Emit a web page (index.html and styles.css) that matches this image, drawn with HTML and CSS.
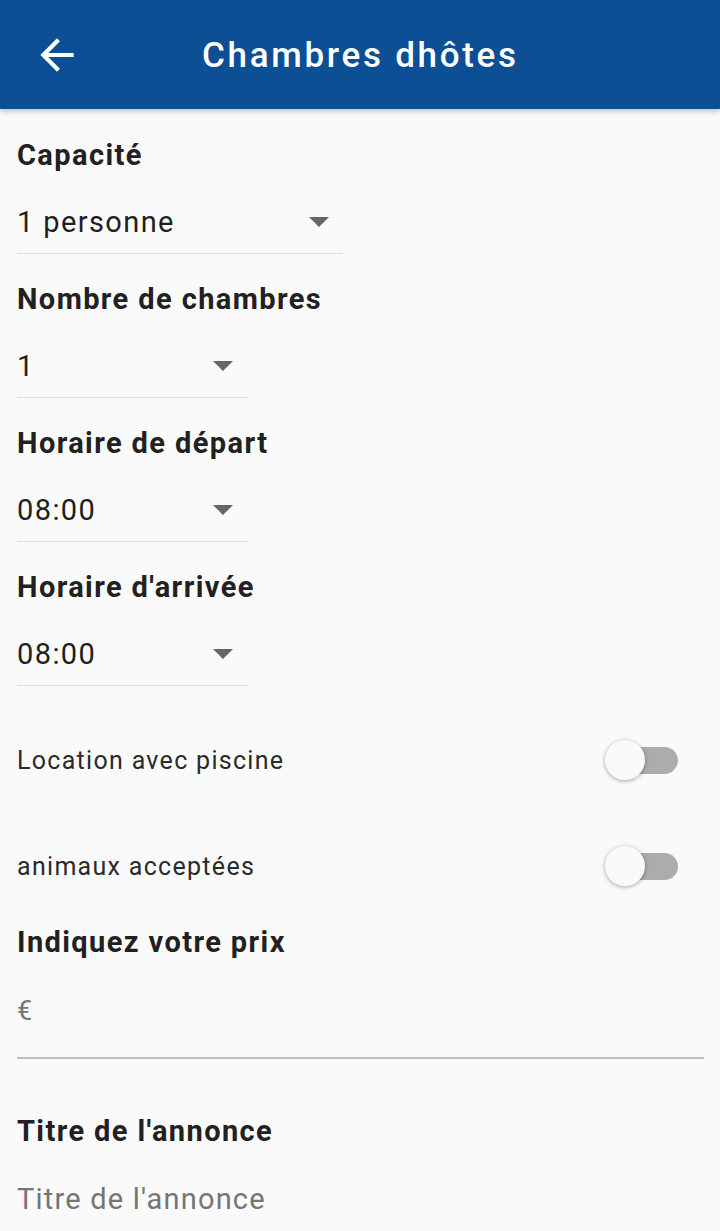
FILE: index.html
```html
<!DOCTYPE html>
<html lang="fr">
<head>
<meta charset="utf-8">
<title>Chambres dhôtes</title>
<link rel="stylesheet" href="styles.css">
</head>
<body>
<header class="appbar">
  <button class="back" aria-label="Retour">
    <svg viewBox="0 0 24 24" width="50" height="50"><path d="M20 11H7.83l5.59-5.59L12 4l-8 8 8 8 1.41-1.41L7.83 13H20v-2z" fill="#fff"/></svg>
  </button>
  <h1 class="title">Chambres dhôtes</h1>
</header>
<main class="form">
  <section class="field">
    <div class="label">Capacité</div>
    <div class="select wide"><span>1 personne</span><i class="caret"></i></div>
  </section>
  <section class="field">
    <div class="label">Nombre de chambres</div>
    <div class="select"><span>1</span><i class="caret"></i></div>
  </section>
  <section class="field">
    <div class="label">Horaire de départ</div>
    <div class="select"><span>08:00</span><i class="caret"></i></div>
  </section>
  <section class="field">
    <div class="label">Horaire d'arrivée</div>
    <div class="select"><span>08:00</span><i class="caret"></i></div>
  </section>
  <div class="toggles">
    <div class="toggle-row"><span>Location avec piscine</span><span class="switch"><span class="thumb"></span></span></div>
    <div class="toggle-row"><span>animaux acceptées</span><span class="switch"><span class="thumb"></span></span></div>
  </div>
  <section class="field">
    <div class="label">Indiquez votre prix</div>
    <div class="input"><span class="placeholder euro">€</span></div>
  </section>
  <section class="field last">
    <div class="label">Titre de l'annonce</div>
    <div class="input plain"><span class="placeholder">Titre de l'annonce</span></div>
  </section>
</main>
</body>
</html>
```
FILE: styles.css
```css
html, body {
  margin: 0;
  padding: 0;
  background: #fafafa;
  font-family: Roboto, "Noto Sans", sans-serif;
  color: #212121;
  overflow: hidden;
}
.appbar {
  height: 109px;
  background: #0c4f95;
  display: flex;
  align-items: center;
  box-shadow: 0 2px 6px rgba(0, 0, 0, 0.25);
  position: relative;
  z-index: 1;
}
.back {
  border: 0;
  background: none;
  padding: 0;
  margin: 0 0 0 32px;
  width: 50px;
  height: 50px;
  display: flex;
}
.title {
  margin: 2px 0 0 120px;
  color: #fff;
  font-size: 35px;
  font-weight: 500;
  letter-spacing: 2.7px;
  line-height: 40px;
}
.form {
  padding: 28px 16px 0 17px;
  display: flex;
  flex-direction: column;
}
.field {
  display: flex;
  flex-direction: column;
  align-items: flex-start;
}
.field + .field {
  margin-top: 27px;
}
.label {
  font-size: 29px;
  font-weight: 700;
  letter-spacing: 1.4px;
  line-height: 36px;
  color: #212121;
}
.select {
  margin-top: 31px;
  width: 231px;
  box-sizing: border-box;
  padding: 0 15px 13px 0;
  border-bottom: 1px solid #dcdcdc;
  display: flex;
  align-items: center;
  justify-content: space-between;
  font-size: 29px;
  letter-spacing: 1.4px;
  line-height: 36px;
  color: #1f1f1f;
}
.select.wide {
  width: 326px;
  padding-right: 14px;
}
.caret {
  width: 0;
  height: 0;
  border-left: 10px solid transparent;
  border-right: 10px solid transparent;
  border-top: 10px solid #666;
}
.toggles {
  margin-top: 21px;
  display: flex;
  flex-direction: column;
}
.toggle-row {
  height: 106px;
  display: flex;
  align-items: center;
  justify-content: space-between;
  padding-right: 26px;
  font-size: 25px;
  letter-spacing: 1.3px;
  color: #2a2a2a;
}
.switch {
  position: relative;
  width: 66px;
  height: 27px;
  border-radius: 14px;
  background: #acacac;
}
.thumb {
  position: absolute;
  left: -7px;
  top: -7px;
  width: 40px;
  height: 40px;
  border-radius: 50%;
  background: #fafafa;
  box-shadow: 0 1px 4px rgba(0, 0, 0, 0.35);
}
.toggles + .field {
  margin-top: 5px;
}
.input {
  margin-top: 32px;
  align-self: stretch;
  padding-bottom: 28px;
  border-bottom: 2px solid #bdbdbd;
  font-size: 29px;
  letter-spacing: 1.2px;
  line-height: 36px;
}
.input.plain {
  border-bottom: 0;
}
.placeholder {
  color: #757575;
}
.euro {
  font-size: 27px;
}
.field.last {
  margin-top: 54px;
}
```
